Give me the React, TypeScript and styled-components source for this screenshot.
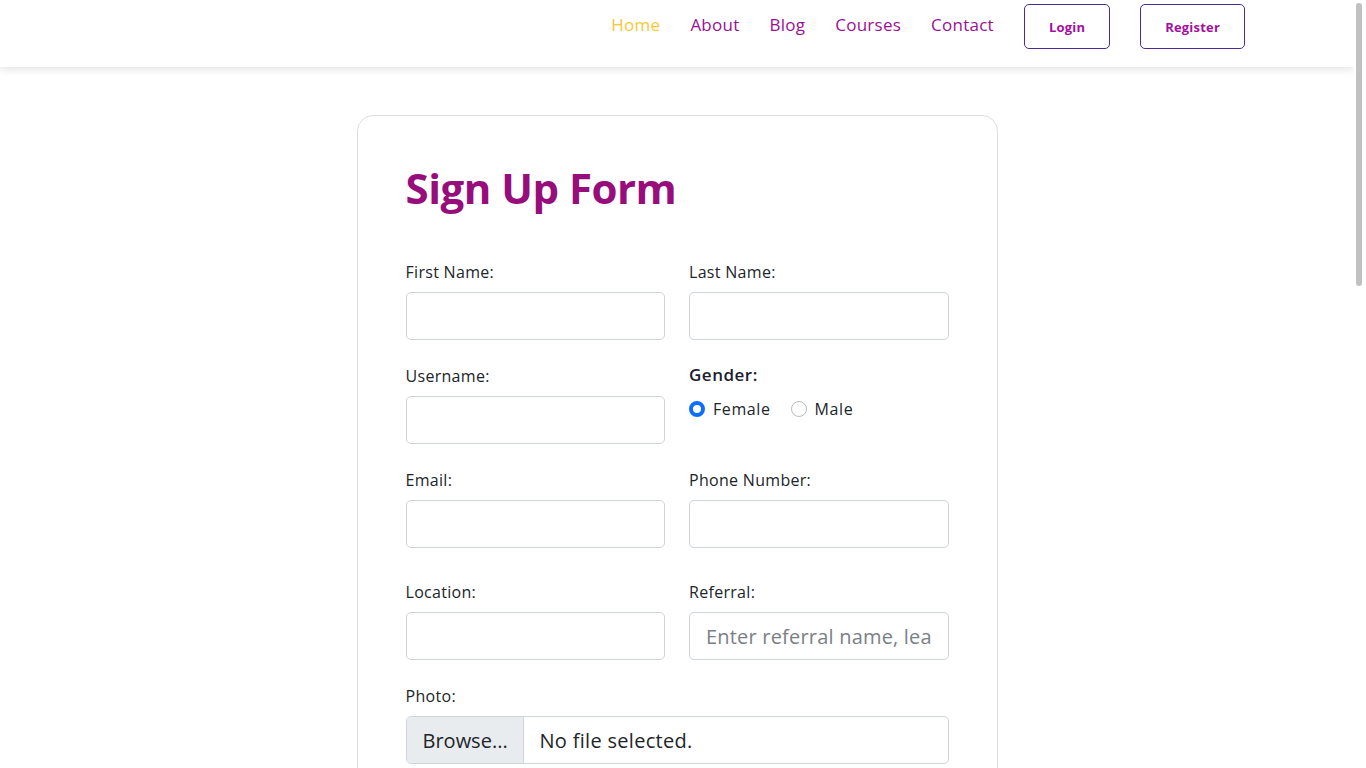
import React from "react";
import styled, { createGlobalStyle } from "styled-components";

const FONT = `"Open Sans", "Noto Sans", sans-serif`;

const Global = createGlobalStyle`
  * { box-sizing: border-box; }
  html, body { margin: 0; padding: 0; background: #fff; overflow: hidden; height: 100%; }
  body { font-family: ${FONT}; color: #212529; }
  #root { height: 100%; }
`;

const Window = styled.div`
  display: flex;
  height: 100vh;
`;

const Page = styled.div`
  flex: 1;
  min-width: 0;
  overflow: hidden;
`;

const ScrollTrack = styled.div`
  width: 12px;
  flex: none;
  background: #fff;
  padding: 3px 4px 0 2px;
`;

const ScrollThumb = styled.div`
  height: 283px;
  border-radius: 3px;
  background: #c1c1c1;
`;

const NavBar = styled.header`
  height: 67px;
  background: #fff;
  box-shadow: 0 2px 8px rgba(0, 0, 0, 0.12);
  position: relative;
  z-index: 2;
`;

const NavInner = styled.nav`
  max-width: 1136px;
  margin: 0 auto;
  padding-top: 4px;
  display: flex;
  justify-content: flex-end;
  align-items: center;
  gap: 30px;
  height: 49px;
`;

const NavLink = styled.a<{ $active?: boolean }>`
  font-size: 17px;
  letter-spacing: 0.25px;
  font-weight: 500;
  color: ${(p) => (p.$active ? "#fbc73a" : "#9b1094")};
  text-decoration: none;
  line-height: 24px;
  margin-top: -3px;
`;

const NavButton = styled.button`
  height: 45px;
  padding: 0 24px;
  border: 1px solid #4a2b96;
  border-radius: 5px;
  background: #fff;
  color: #a4109e;
  font-family: ${FONT};
  font-size: 13px;
  letter-spacing: 0.2px;
  font-weight: 700;
  cursor: pointer;
`;

const Main = styled.main`
  padding: 48px 0 60px;
`;

const Card = styled.section`
  width: 641px;
  min-height: 1900px;
  margin: 0 auto;
  border: 1px solid #dedede;
  border-radius: 16px;
  padding: 48px 48px 48px;
`;

const Title = styled.h1`
  margin: 0 0 48px;
  font-size: 42px;
  line-height: 48px;
  font-weight: 700;
  color: #970d7c;
  letter-spacing: -0.5px;
`;

const Grid = styled.div`
  display: grid;
  grid-template-columns: 1fr 1fr;
  column-gap: 24px;
`;

const Field = styled.div<{ $full?: boolean; $mb?: number }>`
  grid-column: ${(p) => (p.$full ? "1 / -1" : "auto")};
  margin-bottom: ${(p) => p.$mb ?? 24}px;
  display: flex;
  flex-direction: column;
`;

const Label = styled.label`
  font-size: 16px;
  letter-spacing: 0.3px;
  line-height: 24px;
  margin-bottom: 8px;
  color: #212529;
`;

const GroupLabel = styled.div`
  font-size: 17px;
  letter-spacing: 0.5px;
  line-height: 24px;
  font-weight: 600;
  color: #1c1c30;
  margin-bottom: 10px;
  margin-top: -1px;
`;

const Input = styled.input`
  height: 48px;
  width: 100%;
  padding: 8px 16px;
  border: 1px solid #ced4da;
  border-radius: 5px;
  font-family: ${FONT};
  font-size: 20px;
  letter-spacing: 0.2px;
  color: #495057;
  outline: none;
  &::placeholder { color: #7a7f86; }
`;

const RadioRow = styled.div`
  display: flex;
  align-items: center;
  gap: 20px;
`;

const RadioOption = styled.label`
  display: flex;
  align-items: center;
  gap: 8px;
  font-size: 16px;
  letter-spacing: 0.6px;
  color: #212529;
  line-height: 24px;
`;

const RadioDot = styled.span<{ $checked?: boolean }>`
  width: 16px;
  height: 16px;
  border-radius: 50%;
  border: ${(p) => (p.$checked ? "4px solid #0d6efd" : "1px solid #b9bcc0")};
  background: #fff;
  flex: none;
`;

const FileBox = styled.div`
  display: flex;
  height: 48px;
  border: 1px solid #ced4da;
  border-radius: 5px;
  overflow: hidden;
  font-size: 20px;
  letter-spacing: 0.3px;
`;

const FileButton = styled.span`
  width: 117px;
  display: flex;
  align-items: center;
  padding: 0 16px;
  background: #e9ecef;
  border-right: 1px solid #ced4da;
  color: #212529;
  letter-spacing: 0;
`;

const FileText = styled.span`
  display: flex;
  align-items: center;
  padding: 0 16px;
  color: #212529;
`;

export default function App() {
  return (
    <Window>
      <Global />
      <Page>
        <NavBar>
          <NavInner>
            <NavLink href="#" $active>Home</NavLink>
            <NavLink href="#">About</NavLink>
            <NavLink href="#">Blog</NavLink>
            <NavLink href="#">Courses</NavLink>
            <NavLink href="#">Contact</NavLink>
            <NavButton>Login</NavButton>
            <NavButton>Register</NavButton>
          </NavInner>
        </NavBar>
        <Main>
          <Card>
            <Title>Sign Up Form</Title>
            <Grid>
              <Field>
                <Label>First Name:</Label>
                <Input type="text" />
              </Field>
              <Field>
                <Label>Last Name:</Label>
                <Input type="text" />
              </Field>
              <Field>
                <Label>Username:</Label>
                <Input type="text" />
              </Field>
              <Field>
                <GroupLabel>Gender:</GroupLabel>
                <RadioRow>
                  <RadioOption><RadioDot $checked />Female</RadioOption>
                  <RadioOption><RadioDot />Male</RadioOption>
                </RadioRow>
              </Field>
              <Field $mb={32}>
                <Label>Email:</Label>
                <Input type="email" />
              </Field>
              <Field $mb={32}>
                <Label>Phone Number:</Label>
                <Input type="tel" />
              </Field>
              <Field>
                <Label>Location:</Label>
                <Input type="text" />
              </Field>
              <Field>
                <Label>Referral:</Label>
                <Input type="text" placeholder="Enter referral name, lead source" />
              </Field>
              <Field $full>
                <Label>Photo:</Label>
                <FileBox>
                  <FileButton>Browse...</FileButton>
                  <FileText>No file selected.</FileText>
                </FileBox>
              </Field>
            </Grid>
          </Card>
        </Main>
      </Page>
      <ScrollTrack>
        <ScrollThumb />
      </ScrollTrack>
    </Window>
  );
}
